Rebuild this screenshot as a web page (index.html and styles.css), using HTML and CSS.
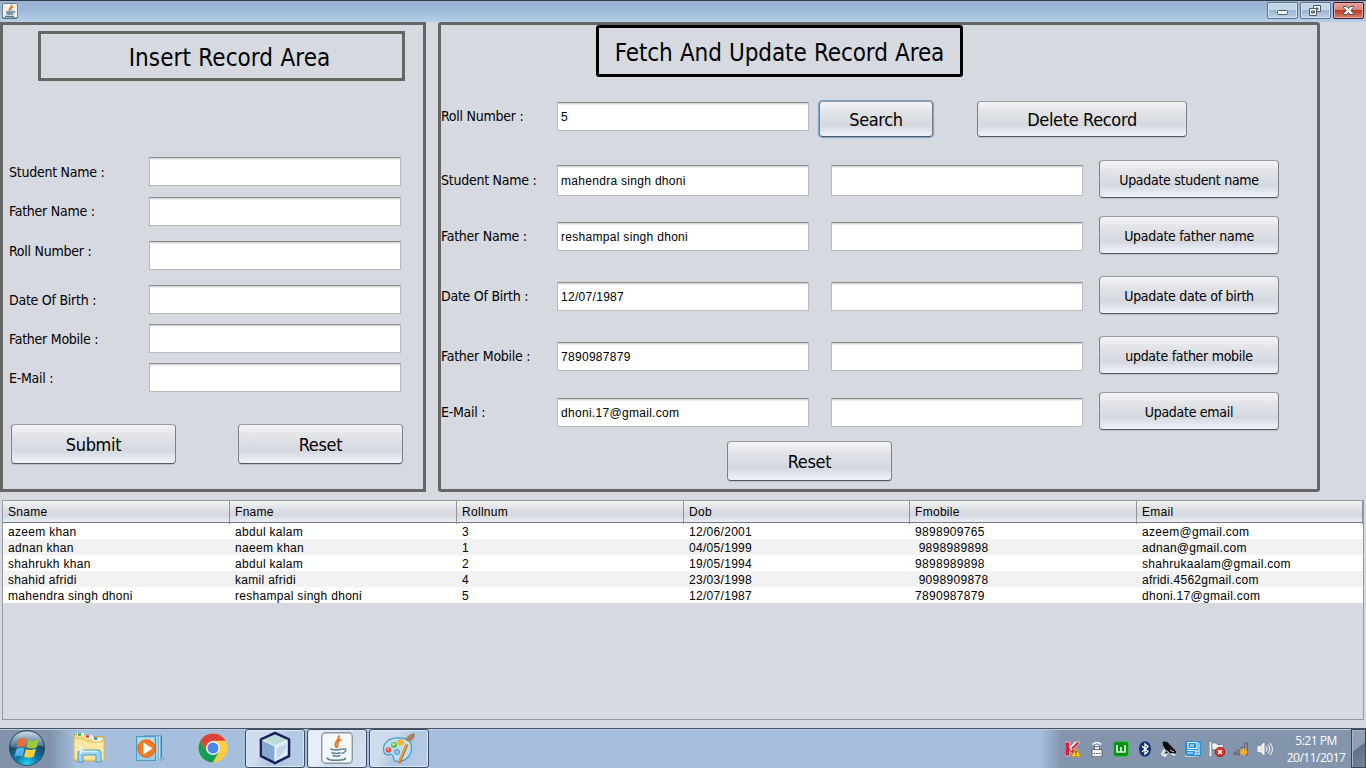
FILE: index.html
```html
<!DOCTYPE html>
<html lang="en">
<head>
<meta charset="utf-8">
<title>Student Records</title>
<link rel="stylesheet" href="styles.css">
</head>
<body>
<header class="titlebar">
  <svg class="app-icon" width="16" height="16" viewBox="0 0 16 16"><rect x=".5" y=".5" width="15" height="14.5" rx="1.5" fill="#f1f3f3" stroke="#71838f"/><path d="M.5 13.5v1q0 .8 1 .8h13q1 0 1-.8v-1" fill="none" stroke="#4d6372"/><path d="M9.7 1.5C10.5 4 6 4.300 7.500 8M11 3.700C8.500 5 9 6 9 7.500" fill="none" stroke="#ed7818" stroke-width="1.400"/><path d="M4 9h7M4.500 11h6M3 13.300h9" stroke="#557991" stroke-width="1.300"/><path d="M11 8.200q2.500-.5 1.700 1.100L10.500 11" fill="none" stroke="#557991"/></svg>
  <div class="win-buttons">
    <span class="win-btn"><svg width="29" height="15" viewBox="0 0 29 15"><rect x="9.500" y="7.500" width="10" height="4" rx="1" fill="#f4f4f4" stroke="#535a68"/></svg></span>
    <span class="win-btn"><svg width="29" height="15" viewBox="0 0 29 15"><path fill="#f4f4f4" fill-rule="evenodd" stroke="#535a68" d="M12.500 2.500h7v6h-7zM15 5h2v1.500h-2z"/><path fill="#f4f4f4" fill-rule="evenodd" stroke="#535a68" d="M8.500 5.500h7v7h-7zM10.500 8h3v2h-3z"/></svg></span>
    <span class="win-btn close"><svg width="29" height="15" viewBox="0 0 29 15"><path fill="#f6f6f6" stroke="#55505c" d="M9.500 3.500h3.300l1.700 2 1.700-2h3.300v1.300l-2.700 2.700 2.700 2.700v1.300h-3.300l-1.700-2-1.700 2H9.500v-1.300l2.700-2.700-2.700-2.700z"/></svg></span>
  </div>
</header>

<main class="panels">
  <section class="panel insert">
    <h1 class="heading">Insert Record Area</h1>
    <div class="insert-rows">
      <label class="row"><span class="label">Student Name :</span><input class="field"></label>
      <label class="row g11 lifted"><span class="label">Father Name :</span><input class="field"></label>
      <label class="row g15 raised"><span class="label">Roll Number :</span><input class="field"></label>
      <label class="row g15"><span class="label">Date Of Birth :</span><input class="field"></label>
      <label class="row g10"><span class="label">Father Mobile :</span><input class="field"></label>
      <label class="row g10"><span class="label">E-Mail :</span><input class="field"></label>
    </div>
    <div class="insert-actions">
      <button class="btn large">Submit</button>
      <button class="btn large">Reset</button>
    </div>
  </section>

  <section class="panel fetch">
    <h1 class="heading dark">Fetch And Update Record Area</h1>
    <div class="search-row">
      <span class="label">Roll Number :</span>
      <input class="field" value="5">
      <button class="btn search focused">Search</button>
      <button class="btn delete">Delete Record</button>
    </div>
    <div class="update-rows">
      <div class="urow"><span class="label">Student Name :</span><input class="field tall" value="mahendra singh dhoni"><input class="field tall"><button class="btn small">Upadate student name</button></div>
      <div class="urow g18"><span class="label">Father Name :</span><input class="field" value="reshampal singh dhoni"><input class="field"><button class="btn small">Upadate father name</button></div>
      <div class="urow g22"><span class="label">Date Of Birth :</span><input class="field" value="12/07/1987"><input class="field"><button class="btn small">Upadate date of birth</button></div>
      <div class="urow g22"><span class="label">Father Mobile :</span><input class="field" value="7890987879"><input class="field"><button class="btn small">update father mobile</button></div>
      <div class="urow g18"><span class="label">E-Mail :</span><input class="field" value="dhoni.17@gmail.com"><input class="field"><button class="btn small">Upadate email</button></div>
    </div>
    <button class="btn large fetch-reset">Reset</button>
  </section>
</main>

<section class="table-pane">
  <div class="tr th"><span>Sname</span><span>Fname</span><span>Rollnum</span><span>Dob</span><span>Fmobile</span><span>Email</span></div>
  <div class="tr"><span>azeem khan</span><span>abdul kalam</span><span>3</span><span>12/06/2001</span><span>9898909765</span><span>azeem@gmail.com</span></div>
  <div class="tr alt"><span>adnan khan</span><span>naeem khan</span><span>1</span><span>04/05/1999</span><span> 9898989898</span><span>adnan@gmail.com</span></div>
  <div class="tr"><span>shahrukh khan</span><span>abdul kalam</span><span>2</span><span>19/05/1994</span><span>9898989898</span><span>shahrukaalam@gmail.com</span></div>
  <div class="tr alt"><span>shahid afridi</span><span>kamil afridi</span><span>4</span><span>23/03/1998</span><span> 9098909878</span><span>afridi.4562gmail.com</span></div>
  <div class="tr"><span>mahendra singh dhoni</span><span>reshampal singh dhoni</span><span>5</span><span>12/07/1987</span><span>7890987879</span><span>dhoni.17@gmail.com</span></div>
</section>

<footer class="taskbar">
  <div class="start">
    <svg width="38" height="38" viewBox="0 0 38 38">
      <defs>
        <radialGradient id="orb" cx=".5" cy=".95" r=".85"><stop offset="0" stop-color="#28d4f4"/><stop offset=".35" stop-color="#0b7cae"/><stop offset=".75" stop-color="#154867"/><stop offset="1" stop-color="#4c7189"/></radialGradient>
        <linearGradient id="gloss" x2="0" y2="1"><stop offset="0" stop-color="#e3edf4" stop-opacity=".85"/><stop offset="1" stop-color="#8fb0c6" stop-opacity=".35"/></linearGradient>
      </defs>
      <circle cx="19" cy="19" r="17.600" fill="url(#orb)" stroke="#31576f"/>
      <path d="M2.500 18C3 8 10 2.500 19 2.500S35 8 35.500 18C27 14 23 22 2.500 18z" fill="url(#gloss)"/>
      <path d="M10.500 10.500q4-2.500 8-.5l-1.700 8q-4-1.700-8 .4z" fill="#ef6c35"/>
      <path d="M20 10.800q4 2 11-.3l-2.400 8q-5 2-10.200-.1z" fill="#9cc93c"/>
      <path d="M8.500 20q4-2.200 8-.5l-2 8q-4-2-8 .3z" fill="#5cb0e8"/>
      <path d="M18 20q5 2 10-.2l-2.300 8q-5 2-9.700-.3z" fill="#fdcf3d"/>
    </svg>
  </div>
  <div class="apps">
    <div class="task"><svg width="34" height="32" viewBox="0 0 34 32">
      <path d="M2 4.500q0-2 2-2h8l2 2h16q2 0 2 2V27q0 2-2 2H4q-2 0-2-2z" fill="#f2d983" stroke="#c8a84e"/>
      <path d="M5 2.500h7M13 5h8M21 7.500h8" stroke="#fff" stroke-width="3"/><path d="M6 2.500h3" stroke="#19b52c" stroke-width="2.500"/><path d="M14 4.500h3" stroke="#d0432c" stroke-width="2.500"/><path d="M22 6.500h3" stroke="#2288d8" stroke-width="2.500"/>
      <path d="M2 7q10-1 12 1.500t18 1V28H4q-2 0-2-2z" fill="#fae7a4" stroke="#dfc26e"/>
      <path d="M8 18h18q3 0 3 3v9h-5v-7H11v7H6v-9q0-3 2-3z" fill="#98d3f0" stroke="#4f9cc5"/><path d="M8.500 19.500h17" stroke="#d9f3fd" stroke-width="1.500"/>
      <path d="M8.500 14v8M5 18h7" stroke="#fff" stroke-width="1"/>
    </svg></div>
    <div class="task"><svg width="32" height="30" viewBox="0 0 32 30">
      <path d="M22 27l9-3-4 4z" fill="#7b91ad" opacity=".5"/>
      <path d="M9 3h17.500v21L20 27z" fill="#69afd3" stroke="#3a86b2"/><path d="M24.500 3v23M22 3v24" stroke="#c0e4f3" stroke-width="1.300"/>
      <rect x="1.500" y="3.500" width="19" height="24" fill="#94cce6" stroke="#4e9ac3"/><path d="M3 5h16v5L3 20z" fill="#c6e7f5" opacity=".7"/>
      <circle cx="11.500" cy="15.500" r="8.700" fill="#f37b20" stroke="#e35d11"/><path d="M8.500 9.500l9 6-9 6z" fill="#fff"/>
    </svg></div>
    <div class="task"><svg width="30" height="30" viewBox="0 0 30 30">
      <circle cx="15" cy="15" r="14.500" fill="#ffcd43"/>
      <path d="M2.400 7.800A14.500 14.500 0 0 0 14.800 29.500L21 18.500 15 15 9 18.500z" fill="#129d59"/>
      <path d="M2.400 7.800A14.500 14.500 0 0 1 27.600 7.800H15L9 12v6.500z" fill="#dc4437"/>
      <circle cx="15" cy="15" r="7" fill="#f5f7f7"/><circle cx="15" cy="15" r="5.500" fill="#4b86ed"/>
    </svg></div>
    <div class="task open"><svg width="32" height="34" viewBox="0 0 32 34">
      <path d="M16 2L30 8.500V25L16 32 2 25V8.500z" fill="#bcd4e8" stroke="#1c2059" stroke-width="2.600" stroke-linejoin="round"/>
      <path d="M3.500 9L16 3.500 28.500 9 16 15z" fill="#b9dbd5"/><path d="M3.500 9.500L16 15.500v15L3.500 24.300z" fill="#86a9d1"/><path d="M28.500 9.500L16 15.500v15l12.500-6.200z" fill="#dcebf7"/>
      <path d="M3.500 9L16 15l12.500-6M16 15v15.500" stroke="#f2fbff" fill="none"/><path d="M18 17l9-4v4l-9 12z" fill="#a8bfe1" opacity=".5"/>
    </svg></div>
    <div class="task open active"><svg width="32" height="32" viewBox="0 0 32 32">
      <rect x=".7" y=".7" width="30.600" height="30.600" rx="4" fill="#f5f8f9" stroke="#8b98a4" stroke-width="1.400"/>
      <path d="M17.500 3.500C20 8 11 9.500 15.500 16M20 7.500C14 10 18.500 12.500 15.700 16" fill="none" stroke="#ea7825" stroke-width="2"/>
      <path d="M9.500 17q5 2 11 0M10.500 20.500q5 2 9 0M11.500 23.500q4 1.500 8 0M6 25.500q0 3 10 2.700T24 25.800" fill="none" stroke="#557e98" stroke-width="1.600"/><path d="M21 17.200q5-1 3.500 2-1 1.600-4 2.300" fill="none" stroke="#557e98" stroke-width="1.400"/>
    </svg></div>
    <div class="task open"><svg width="34" height="34" viewBox="0 0 34 34">
      <path d="M18 7C7 6 1 12 1.500 19q.5 6 6 4.500 4-.5 4 3.500 0 4 6 3.500C27 29 31 21 29 13 27 8 22 7 18 7z" fill="#b8dff2" stroke="#4c9dc4" stroke-width="1.300"/><circle cx="15" cy="21" r="2.500" fill="#9fc4de" stroke="#4c8fb9"/>
      <circle cx="6.500" cy="19" r="2.800" fill="#e84e3c"/><circle cx="12" cy="14" r="3" fill="#62bc4c"/><circle cx="18.500" cy="11.500" r="3.200" fill="#f6b52d"/>
      <circle cx="6" cy="18.300" r="1" fill="#fbb9b0"/><circle cx="11.500" cy="13.300" r="1.200" fill="#cdf0b7"/>
      <path d="M26 11L17 32" stroke="#c46e18" stroke-width="3"/><path d="M25.500 11L17 31" stroke="#f6a347" stroke-width="1.500"/><path d="M24 9.500q0-5 8-7.500 3 4-4.500 9z" fill="#ad805a"/><path d="M23.500 9.500l4.200 2-1 2.500-4-2z" fill="#dce2e5"/>
    </svg></div>
  </div>

  <div class="tray">
    <svg viewBox="0 0 16 16"><path d="M0 1h4.500v5.500L10 1h5L8.500 8l5 7H9L4.500 9.500V15H0z" fill="#df2034" stroke="#f3dcdc" stroke-width=".7"/><path d="M4.500 6.500L10 1h5L6 10z" fill="#f6eaea"/><path d="M6 7.500L12 1.300h2.500L8 8z" fill="#d21b2e"/><path d="M11 7l4.700 8.500H6.300z" fill="#ffd23d" stroke="#d88e12"/><path d="M11 9.500v3M11 13.300v1" stroke="#3b3113" stroke-width="1.200"/></svg>
    <svg viewBox="0 0 16 16"><path d="M3.500 3.500q4.500-4 9 0M5.300 5.800q2.700-2.500 5.400 0" fill="none" stroke="#fff" stroke-width="1.500"/><rect x="5.500" y="5.500" width="5" height="3.500" fill="#f5f5f5" stroke="#3c434d" stroke-width=".7"/><path d="M3 8.500h10v7.200H3z" fill="#f5f5f5" stroke="#3c434d" stroke-width=".7"/><path d="M4.500 12.500H6m1.200 0h1.500m1.200 0h1.500" stroke="#3e4753"/></svg>
    <svg viewBox="0 0 16 16"><rect x=".7" y=".7" width="14.600" height="14.600" rx="2" fill="#078e18" stroke="#34be3b"/><path d="M4 4v7h8V4M8 6v5" fill="none" stroke="#d8f7d1" stroke-width="1.700"/></svg>
    <svg viewBox="0 0 16 16"><ellipse cx="8" cy="8" rx="6" ry="7.800" fill="#0b306c"/><path d="M5 5l6 5.500L8 13V3l3 2.500L5 11" fill="none" stroke="#fff" stroke-width="1.300"/></svg>
    <svg viewBox="0 0 16 16"><path d="M4 8l-3 5 3 2 3-4M7 9l3 2M10 12l4 2" fill="none" stroke="#e9edf0" stroke-width="2"/><path d="M2 .8q4-1 6 2l7 7.500q1 2-2 2.200Q5 12 3 6 1 3 2 .8z" fill="#090909"/><path d="M9 9l4 2" stroke="#d9dde2"/><circle cx="5.500" cy="11.500" r="1.700" fill="#202020" stroke="#e9edf0"/></svg>
    <svg viewBox="0 0 16 16"><rect width="16" height="16" rx="2" fill="#2790dc"/><path d="M3 1.500h9v6H3zM2 9.500h7M2 12h6" fill="none" stroke="#e5f6ff" stroke-width="1.200"/><path d="M5 3l4 3m0-3L5 6M11 9v4M14 2v11M9 10h5M9 13h6" stroke="#e5f6ff"/><path d="M0 13v2q6 1 14 1" fill="none" stroke="#e6e8b1"/></svg>
    <svg viewBox="0 0 16 16"><path d="M1.500 1v14" stroke="#f7f7f7" stroke-width="1.700"/><path d="M3 2q3-1 5 1t6 0v7q-3 1-5-.5T3 9z" fill="#f5f6f6" stroke="#565d65" stroke-width=".6"/><circle cx="11" cy="11" r="4.700" fill="#d83328" stroke="#a71b19"/><path d="M9 9l4 4m0-4l-4 4" stroke="#fff" stroke-width="1.500"/></svg>
    <svg viewBox="0 0 16 16"><path d="M1 11h2v3H1zM4.500 9h2v5h-2zM8 6h2v8H8zM11.500 2h3v12h-3z" fill="#8a8e91" stroke="#565d66" stroke-width=".8"/><path d="M10.500 6l1 2.500 2.500-1-1 2.500 2.500 1-2.500 1 1 2.500-2.500-1-1 2.500-1-2.500-2.500 1 1-2.500-2.500-1 2.500-1-1-2.500 2.500 1z" fill="#ffad20"/></svg>
    <svg viewBox="0 0 16 16"><path d="M1 5.500h2.500L7 2v12l-3.500-3.500H1z" fill="#e7eaec" stroke="#f8f8f8"/><path d="M9 5.500q2 2.500 0 5M11 3.500q3.500 4.500 0 9M13 2q5 6 0 12" fill="none" stroke="#e9edf2" stroke-width="1.100"/></svg>
  </div>
  <div class="clock"><span>5:21 PM</span><span>20/11/2017</span></div>
  <div class="show-desktop"></div>
</footer>
</body>
</html>
```

FILE: styles.css
```css
* { box-sizing: border-box; }
body {
  margin: 0;
  width: 1366px;
  height: 768px;
  overflow: hidden;
  display: flex;
  flex-direction: column;
  background: #d6d9e0;
  color: #000;
  font-family: "Liberation Sans", Arial, sans-serif;
}
svg { display: block; flex: none; }
input, button { margin: 0; outline: 0; color: #000; }

/* Window frame */
.titlebar {
  flex: none;
  height: 22px;
  display: flex;
  justify-content: space-between;
  padding: 1px 2px 0 2px;
  border-top: 1px solid #353b46;
  background: linear-gradient(#99b3d1, #9cb7d5 35%, #b7cfe9);
}
.app-icon { margin-top: 1px; }
.win-buttons { display: flex; gap: 2px; }
.win-btn {
  width: 31px;
  height: 17px;
  border: 1px solid #61728d;
  border-radius: 2px;
  box-shadow: inset 0 0 0 1px #d4e2f1;
  background: linear-gradient(#c3d6e8 48%, #9bb6d2 50%, #bad0e6);
}
.win-btn.close {
  border-color: #461824;
  box-shadow: inset 0 0 0 1px #e6ada7;
  background: linear-gradient(#e3a198, #d98475 46%, #b83922 50%, #d58270);
}

/* Panels */
.panels { flex: none; display: flex; gap: 12px; height: 470px; }
.panel { border: 3px solid #666; }
.insert { width: 426px; padding: 6px 0 0 6px; }
.fetch { width: 882px; border-radius: 3px; }
.heading {
  display: flex;
  align-items: center;
  justify-content: center;
  margin: 0;
  width: 367px;
  height: 50px;
  border: 3px solid #666;
  font: 24px "DejaVu Sans Condensed", "DejaVu Sans", sans-serif;
  font-stretch: condensed;
  letter-spacing: 0.05px;
  word-spacing: 0.5px;
}
.insert .heading { margin-left: 29px; padding: 3px 0 0 16px; }
.heading.dark { height: 52px; margin-left: 155px; padding-top: 3px; border-color: #000; border-radius: 3px; letter-spacing: -0.1px; }

.label, .btn {
  font: 14px "DejaVu Sans Condensed", "DejaVu Sans", sans-serif;
  font-stretch: condensed;
  letter-spacing: -0.4px;
  white-space: nowrap;
}
.label { line-height: 20px; letter-spacing: -0.25px; }
.field {
  width: 252px;
  height: 29px;
  padding: 0 4px 0 3px;
  border: 1px solid #b7b9bd;
  border-top-color: #8d8e91;
  border-radius: 0;
  background: linear-gradient(#d4d4d5 0 1px, #f1f1f1 1px 2px, #fff 2px);
  font: 12px "Liberation Sans", Arial, sans-serif;
  letter-spacing: 0.3px;
}
.field.tall { height: 31px; }

.insert-rows { margin-top: 76px; display: flex; flex-direction: column; }
.row { display: flex; align-items: center; height: 29px; }
.row .label { width: 140px; }
.lifted .label { padding-bottom: 2px; }
.raised .label { padding-bottom: 9px; }
.g10 { margin-top: 10px; }
.g11 { margin-top: 11px; }
.g15 { margin-top: 15px; }
.g18 { margin-top: 18px; }
.g22 { margin-top: 22px; }

.btn {
  display: flex;
  align-items: center;
  justify-content: center;
  padding: 2px 0 0;
  border: 1px solid #7c7f86;
  border-top-color: #999ba1;
  border-bottom-color: #55585f;
  border-radius: 4px;
  box-shadow: 0 1px 0 #bcbfc6;
  background: linear-gradient(#f3f4f6, #e1e3e7 30%, #d5d8df 68%, #e0e4ec 82%, #eff3fb);
}
.btn.large, .btn.search, .btn.delete { padding-top: 0; font-size: 18px; letter-spacing: -0.35px; }
.btn.large { width: 165px; height: 40px; }
.btn.small { width: 180px; height: 38px; letter-spacing: -0.28px; }
.btn.focused { box-shadow: 0 0 0 1px #73a4d1, 0 0 1px 1px #8ab3da; }
.insert-actions { display: flex; gap: 62px; margin: 32px 0 0 2px; }

.search-row { display: flex; margin-top: 24px; height: 36px; }
.search-row .label { width: 116px; padding-top: 5px; }
.search-row .field { margin-top: 1px; }
.search-row .btn { height: 36px; }
.btn.search { width: 114px; margin-left: 10px; }
.btn.delete { width: 210px; margin-left: 44px; }

.update-rows { margin-top: 23px; }
.urow { display: flex; height: 38px; }
.urow .label { width: 116px; padding-top: 10px; }
.urow .field { margin: 6px 22px 0 0; }
.urow .field.tall { margin-top: 5px; }
.urow .field + .btn { margin-left: -6px; }
.fetch-reset { margin: 11px 0 0 286px; }

/* Records table */
.table-pane {
  flex: none;
  width: 1362px;
  height: 220px;
  margin: 8px 0 0 2px;
  border: 1px solid #9499a5;
}
.tr {
  display: grid;
  grid-template-columns: 227px 227px 227px 226px 227px 226px;
  height: 16px;
  background: #fff;
  font-size: 12px;
  line-height: 19px;
  letter-spacing: 0.3px;
}
.tr span { height: 100%; padding-left: 5px; white-space: pre; }
.tr.alt { background: #f2f2f2; }
.tr.th {
  height: 22px;
  border-bottom: 1px solid #737781;
  background: linear-gradient(#f3f4f6, #dfe1e5 35%, #d5d8df 68%, #ebeff7);
  line-height: 23px;
}
.th span { border-right: 1px solid #8f939d; }

/* Taskbar */
.taskbar {
  flex: none;
  display: flex;
  height: 40px;
  margin-top: 8px;
  border-top: 1px solid #465263;
  box-shadow: inset 0 1px 0 #bccde0;
  background: linear-gradient(90deg, #8192aa 0 50px, #a5bfdd 76px 1040px, #8395ad 1062px);
}
.start { width: 59px; padding-left: 8px; }
.apps { display: flex; gap: 2px; }
.task { display: flex; align-items: center; justify-content: center; width: 60px; height: 39px; padding-bottom: 2px; }
.task.open {
  border: 1px solid #3d4b60;
  border-radius: 3px;
  box-shadow: inset 0 0 0 1px #dce7f4;
  background: linear-gradient(125deg, #cfdced 0 35%, #b0c6e2 55%, #b9cde6);
}
.task.active { background: linear-gradient(125deg, #e7eef7 0 35%, #cbd9ec 55%, #d5e2f2); }
.tray { display: flex; align-items: center; gap: 8px; margin-left: auto; }
.tray svg { width: 16px; height: 16px; }
.clock {
  display: flex;
  flex-direction: column;
  align-items: center;
  width: 58px;
  margin-left: 14px;
  padding-top: 3px;
  color: #fff;
  font: 12px/17px "Open Sans", "Noto Sans", sans-serif;
  letter-spacing: -0.5px;
  white-space: nowrap;
}
.show-desktop {
  width: 15px;
  margin-left: 6px;
  border: 1px solid #39465a;
  box-shadow: inset 1px 1px 0 #a7b6c8;
  background: linear-gradient(145deg, #909fb3 45%, #5e6f87 50%, #75859b);
}
```
